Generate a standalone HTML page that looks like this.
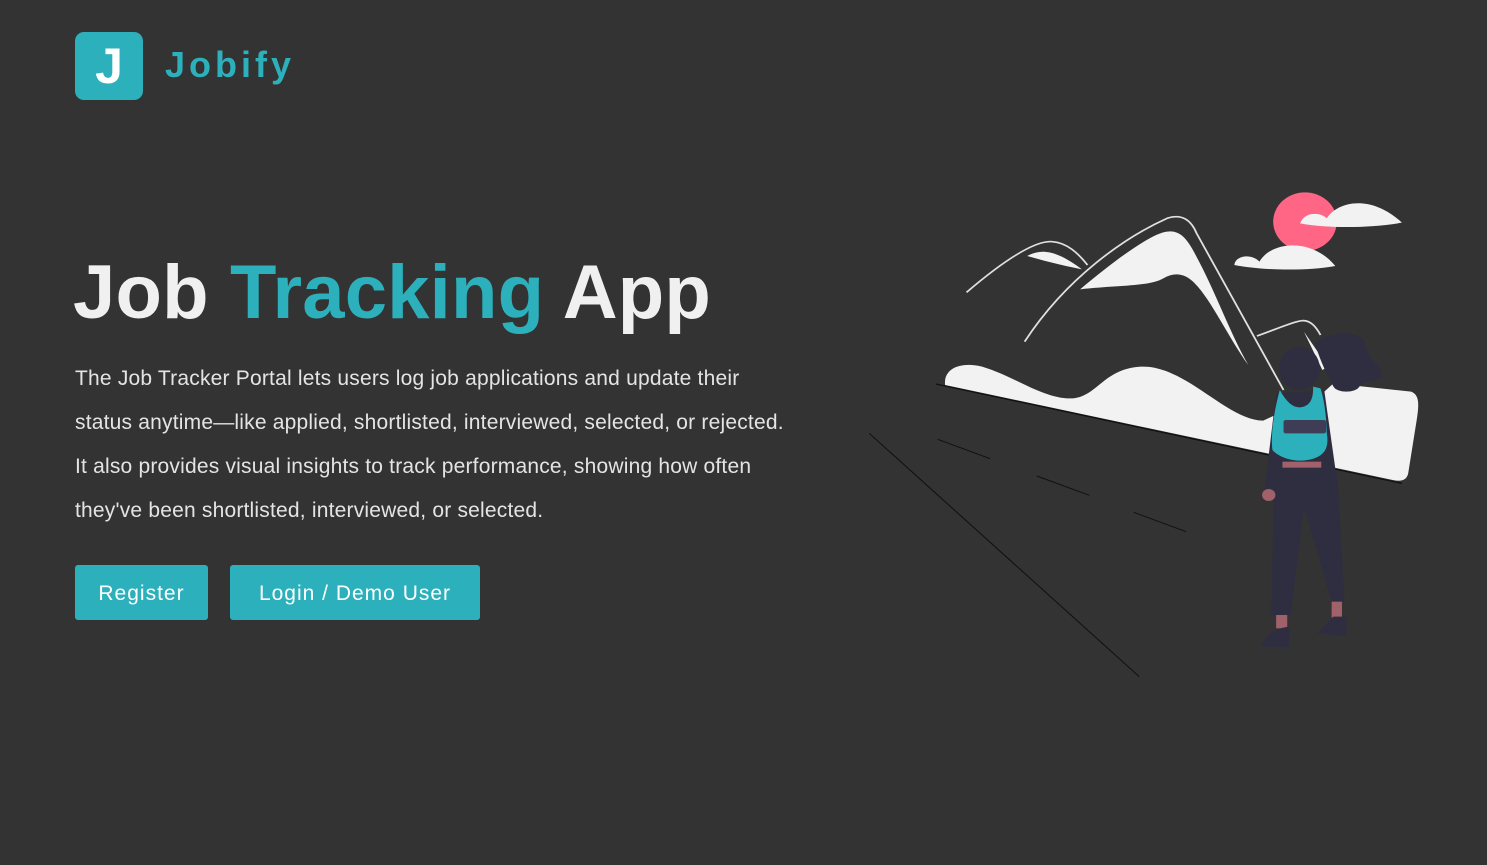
<!DOCTYPE html>
<html><head><meta charset="utf-8"><style>
*{margin:0;padding:0;box-sizing:border-box}
body{width:1487px;height:865px;background:#333;font-family:"Liberation Sans",sans-serif;position:relative;overflow:hidden}
.logo{position:absolute;left:75px;top:32px;width:68px;height:68px;background:#2cb1bc;border-radius:9px;color:#fff;font-weight:bold;font-size:50px;text-align:center;line-height:68px}
.brand{position:absolute;left:165px;top:44px;color:#2cb1bc;font-weight:bold;font-size:36px;letter-spacing:4px}
h1{position:absolute;left:73px;top:249px;font-size:76px;font-weight:bold;color:#f0f0f0;white-space:nowrap;letter-spacing:0.2px}
h1 span{color:#2cb1bc}
p{position:absolute;left:75px;top:357px;font-size:21px;line-height:44px;color:#e4e4e4;white-space:nowrap;letter-spacing:0.2px}
.btn{position:absolute;top:565px;height:55px;background:#2cb1bc;color:#fff;font-size:21px;letter-spacing:1px;line-height:57px;text-align:center;border-radius:3px}
svg{position:absolute;left:860px;top:180px}
</style></head><body>
<div class="logo">J</div>
<div class="brand">Jobify</div>
<h1>Job <span>Tracking</span> App</h1>
<p>The Job Tracker Portal lets users log job applications and update their<br>status anytime—like applied, shortlisted, interviewed, selected, or rejected.<br>It also provides visual insights to track performance, showing how often<br>they've been shortlisted, interviewed, or selected.</p>
<div class="btn" style="left:75px;width:133px">Register</div>
<div class="btn" style="left:230px;width:250px">Login / Demo User</div>
<svg width="580" height="500" viewBox="0 0 1568 1500" preserveAspectRatio="none">
<ellipse cx="1203" cy="125" rx="86" ry="88" fill="#ff6584"/>
<path d="M1190 130 C1200 95 1245 95 1262 115 C1290 65 1380 40 1465 128 C1380 145 1260 145 1190 130 Z" fill="#f2f2f2"/>
<path d="M1012 255 C1015 225 1060 220 1080 245 C1110 185 1220 170 1285 258 C1200 275 1080 270 1012 255 Z" fill="#f2f2f2"/>
<path d="M288 337 C380 250 470 180 520 185 C560 188 590 220 615 255" stroke="#e0e0e0" stroke-width="5" fill="none"/>
<path d="M452 228 C490 205 530 210 600 268 C540 255 490 240 452 228 Z" fill="#f2f2f2"/>
<path d="M445 485 C560 290 720 170 830 115 C870 100 895 120 910 160 L1145 630" stroke="#e0e0e0" stroke-width="5" fill="none"/>
<path d="M595 328 C700 230 790 160 830 155 C860 150 880 170 900 210 C960 330 1000 460 1050 555 C1000 480 950 360 905 310 C880 280 850 275 820 295 C780 320 700 315 595 328 Z" fill="#f2f2f2"/>
<path d="M1073 468 C1120 450 1170 425 1195 422 C1220 420 1235 445 1245 465" stroke="#e0e0e0" stroke-width="5" fill="none"/>
<path d="M1200 455 L1265 560 L1250 570 Z" fill="#f2f2f2"/>
<path d="M230 615 C225 560 280 545 330 560 C420 590 500 660 575 655 C640 650 660 565 760 560 C880 555 990 720 1090 722 L1250 640 L1280 610 L1490 635 C1512 645 1512 670 1505 720 L1482 880 C1478 902 1460 905 1440 900 Z" fill="#f2f2f2"/>
<path d="M205 612 L1465 910" stroke="#111" stroke-width="4"/>
<g stroke="#111" stroke-width="3">
<path d="M25 760 L755 1490"/><path d="M210 778 L352 836"/><path d="M478 888 L620 946"/><path d="M740 997 L882 1055"/>
</g>
<path d="M1230 490 C1260 450 1360 450 1365 490 C1370 540 1420 560 1410 590 C1390 610 1360 600 1350 620 C1340 640 1290 640 1280 620 C1260 580 1240 530 1230 490 Z" fill="#2f2e41"/>
<ellipse cx="1188" cy="565" rx="55" ry="65" fill="#2f2e41"/>
<path d="M1125 640 L1255 630 L1290 905 L1285 955 L1270 955 L1265 900 L1120 900 L1120 945 L1092 945 Z" fill="#2f2e41"/>
<path d="M1120 880 L1290 880 L1310 1265 L1275 1265 L1200 980 L1165 1305 L1112 1305 Z" fill="#2f2e41"/>
<circle cx="1105" cy="945" r="18" fill="#a0616a"/>
<rect x="1125" y="1305" width="30" height="40" fill="#a0616a"/>
<rect x="1275" y="1265" width="28" height="48" fill="#a0616a"/>
<path d="M1085 1400 C1090 1370 1120 1345 1160 1340 L1160 1402 Z" fill="#2f2e41"/>
<path d="M1235 1360 L1280 1310 L1315 1310 L1315 1368 Z" fill="#2f2e41"/>
<path d="M1135 630 C1150 660 1170 690 1200 680 C1225 670 1225 640 1225 620 L1245 625 C1255 660 1260 700 1262 760 C1268 800 1260 830 1210 840 C1170 848 1130 830 1115 810 C1110 760 1120 690 1135 630 Z" fill="#2cb1bc"/>
<rect x="1145" y="720" width="115" height="40" rx="6" fill="#3f3d56"/>
<rect x="1142" y="845" width="105" height="18" fill="#a0616a"/>
</svg>
</body></html>
